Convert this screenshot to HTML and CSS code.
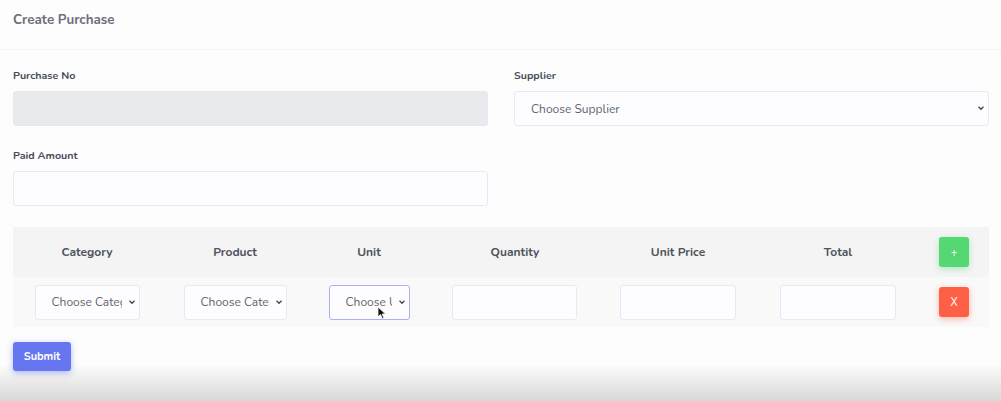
FILE: index.html
```html
<!DOCTYPE html>
<html>
<head>
<meta charset="utf-8">
<link rel="stylesheet" href="styles.css">
</head>
<body>
<div class="card">
  <div class="card-header"><h4>Create Purchase</h4></div>
  <div class="card-body">
    <div class="row first">
      <div class="group">
        <label>Purchase No</label>
        <input class="control readonly" type="text" readonly>
      </div>
      <div class="group">
        <label>Supplier</label>
        <div class="select-wrap">
          <div class="control select big"><span class="val">Choose Supplier</span></div>
          <svg class="chev" width="10" height="10" viewBox="0 0 10 10"><path d="M2.5 3.8 L5 6.3 L7.5 3.8" fill="none" stroke="#444" stroke-width="1.3"/></svg>
        </div>
      </div>
    </div>
    <div class="row second">
      <div class="group">
        <label>Paid Amount</label>
        <input class="control" type="text">
      </div>
      <div class="group"></div>
    </div>
    <div class="table">
      <div class="thead">
        <div class="th">Category</div>
        <div class="th">Product</div>
        <div class="th">Unit</div>
        <div class="th">Quantity</div>
        <div class="th">Unit Price</div>
        <div class="th">Total</div>
        <div class="th"><button class="btn btn-add">+</button></div>
      </div>
      <div class="tbody">
        <div class="td"><div class="select-wrap w-cat"><div class="control select small"><span class="val">Choose Category</span></div><svg class="chev" width="10" height="10" viewBox="0 0 10 10"><path d="M2.5 3.8 L5 6.3 L7.5 3.8" fill="none" stroke="#444" stroke-width="1.3"/></svg></div></div>
        <div class="td"><div class="select-wrap w-prod"><div class="control select small"><span class="val">Choose Category</span></div><svg class="chev" width="10" height="10" viewBox="0 0 10 10"><path d="M2.5 3.8 L5 6.3 L7.5 3.8" fill="none" stroke="#444" stroke-width="1.3"/></svg></div></div>
        <div class="td"><div class="select-wrap w-unit"><div class="control select small focus"><span class="val">Choose Unit</span></div><svg class="chev" width="10" height="10" viewBox="0 0 10 10"><path d="M2.5 3.8 L5 6.3 L7.5 3.8" fill="none" stroke="#444" stroke-width="1.3"/></svg>
          <svg class="cursor" width="10" height="14" viewBox="0 0 10 14"><path d="M1 1 L1 11 L3.5 8.6 L5.3 12.6 L6.9 11.9 L5.1 8 L8.6 8 Z" fill="#111" stroke="#fff" stroke-width="0.8"/></svg></div></div>
        <div class="td"><input class="control w-qty" type="text"></div>
        <div class="td"><input class="control w-price" type="text"></div>
        <div class="td"><input class="control w-total" type="text"></div>
        <div class="td"><button class="btn btn-del">X</button></div>
      </div>
    </div>
    <button class="btn btn-submit">Submit</button>
  </div>
</div>
</body>
</html>
```
FILE: styles.css
```css
html, body {
  margin: 0;
  padding: 0;
  background: #fdfdfd;
  font-family: "Nunito", "Lato", "Open Sans", sans-serif;
}
.card {
  width: 1001px;
  height: 401px;
  overflow: hidden;
  background: linear-gradient(to bottom, #fdfdfd 0, #fdfdfd 364px, #d7d7d7 401px);
}
.card-header {
  height: 50px;
  border-bottom: 1px solid #f3f3f3;
  box-sizing: border-box;
  padding: 10px 13px 0;
}
.card-header h4 {
  margin: 0;
  font-size: 13.4px;
  font-weight: 700;
  color: #6c6e78;
  line-height: 19px;
}
.card-body {
  padding: 19px 12px 0 13px;
}
.row {
  display: flex;
  gap: 26px;
}
.group {
  flex: 1;
  display: flex;
  flex-direction: column;
}
.first .group {
  margin-bottom: 23px;
}
.second .group {
  margin-bottom: 21px;
}
label {
  font-size: 10.7px;
  font-weight: 700;
  color: #464b5a;
  line-height: 14px;
  margin-bottom: 8px;
}
.control {
  box-sizing: border-box;
  height: 35px;
  border: 1px solid #e8e9f6;
  border-radius: 3px;
  background: #fdfcfe;
  font-family: inherit;
  outline: none;
  width: 100%;
  margin: 0;
}
.readonly {
  background: #e8eaee;
  border-color: #e6e8ec;
}
.select-wrap {
  position: relative;
}
.select {
  display: flex;
  align-items: center;
  color: #62646e;
  font-size: 12px;
  white-space: nowrap;
}
.val {
  overflow: hidden;
  flex: 1;
  min-width: 0;
}
.select.big {
  padding-left: 16px;
}
.select.small {
  padding-left: 16px;
  padding-right: 17px;
}
.select.focus {
  border-color: #aab2f4;
}
.chev {
  position: absolute;
  right: 3px;
  top: 12px;
}
.cursor {
  position: absolute;
  left: 48px;
  top: 21px;
}
.table {
  width: 976px;
}
.thead, .tbody {
  display: grid;
  grid-template-columns: 148px 148px 120px 172px 154px 166px 68px;
  height: 50px;
  align-items: center;
  justify-items: center;
}
.thead {
  background: #f4f4f4;
}
.tbody {
  background: #f9f9f9;
}
.th {
  font-size: 12px;
  font-weight: 700;
  color: #4f525c;
}
.td {
  display: flex;
  justify-content: center;
  width: 100%;
}
.w-cat { width: 105px; }
.w-prod { width: 103px; }
.w-unit { width: 81px; }
.w-qty { width: 125px; margin-left: -1px; }
.w-price { width: 116px; }
.w-total { width: 116px; }
.btn {
  border: none;
  color: #fff;
  font-family: inherit;
  font-weight: 700;
  border-radius: 3px;
  padding: 0;
  cursor: pointer;
}
.btn-add, .btn-del {
  width: 30px;
  height: 30px;
  font-size: 11px;
  font-weight: 400;
  margin-left: -2px;
}
.btn-add {
  background: #55d773;
  box-shadow: 0 2px 6px rgba(85, 215, 115, 0.45);
}
.btn-del {
  background: #fd6044;
  box-shadow: 0 2px 6px rgba(253, 96, 68, 0.45);
}
.btn-submit {
  margin-top: 15px;
  width: 58px;
  height: 29px;
  font-size: 11px;
  background: #6676f0;
  box-shadow: 0 2px 6px rgba(102, 118, 240, 0.5);
  display: block;
}
```
